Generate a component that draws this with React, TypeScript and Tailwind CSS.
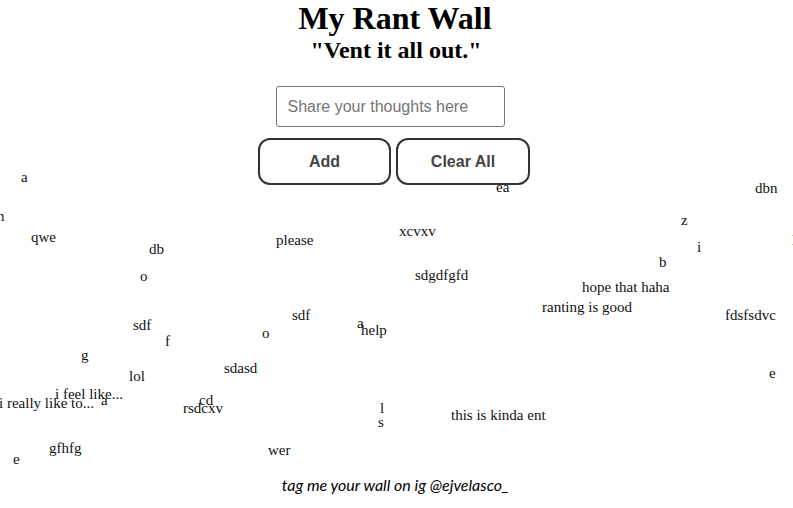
const words: { text: string; x: number; y: number }[] = [
  { text: "a", x: 21, y: 169 },
  { text: "n", x: -3, y: 208 },
  { text: "qwe", x: 31, y: 229 },
  { text: "db", x: 149, y: 241 },
  { text: "o", x: 140, y: 268 },
  { text: "please", x: 276, y: 232 },
  { text: "xcvxv", x: 399, y: 223 },
  { text: "sdgdfgfd", x: 415, y: 267 },
  { text: "ea", x: 496, y: 179 },
  { text: "dbn", x: 755, y: 180 },
  { text: "z", x: 681, y: 212 },
  { text: "i", x: 697, y: 239 },
  { text: "l", x: 792, y: 232 },
  { text: "b", x: 659, y: 254 },
  { text: "hope that haha", x: 582, y: 279 },
  { text: "ranting is good", x: 542, y: 299 },
  { text: "fdsfsdvc", x: 725, y: 307 },
  { text: "sdf", x: 133, y: 317 },
  { text: "f", x: 165, y: 333 },
  { text: "sdf", x: 292, y: 307 },
  { text: "o", x: 262, y: 325 },
  { text: "a", x: 357, y: 315 },
  { text: "help", x: 361, y: 322 },
  { text: "g", x: 81, y: 347 },
  { text: "lol", x: 129, y: 368 },
  { text: "sdasd", x: 224, y: 360 },
  { text: "e", x: 769, y: 365 },
  { text: "i feel like...", x: 55, y: 386 },
  { text: "i really like to...", x: -1, y: 395 },
  { text: "a", x: 101, y: 392 },
  { text: "cd", x: 199, y: 392 },
  { text: "rsdcxv", x: 183, y: 400 },
  { text: "l", x: 380, y: 400 },
  { text: "s", x: 378, y: 414 },
  { text: "this is kinda ent", x: 451, y: 407 },
  { text: "gfhfg", x: 49, y: 440 },
  { text: "e", x: 13, y: 451 },
  { text: "wer", x: 268, y: 442 },
];

const RantWord = (props: { text: string; x: number; y: number }) => {
  const { text, x, y } = props;
  return (
    <span
      className="absolute whitespace-nowrap text-[15px] leading-[17px] text-[#111]"
      style={{ left: x, top: y }}
    >
      {text}
    </span>
  );
};

const App = () => {
  return (
    <div className="relative h-[508px] w-full overflow-hidden bg-white font-['Liberation_Serif',serif] text-black">
      {/* the wall */}
      <div className="absolute inset-0">
        {words.map((w, i) => (
          <RantWord key={i} text={w.text} x={w.x} y={w.y} />
        ))}
      </div>

      <div className="relative flex h-full flex-col items-center">
        <h1 className="mr-[3px] text-[32px] font-bold leading-[36px]">My Rant Wall</h1>
        <h2 className="mr-[1px] text-[24px] font-bold leading-[28px]">"Vent it all out."</h2>

        <input
          type="text"
          placeholder="Share your thoughts here"
          className="mt-[22px] mr-[13px] h-[41px] w-[229px] rounded-[3px] border border-[#767676] bg-white px-[11px] font-['Liberation_Sans',sans-serif] text-[16px] text-black outline-none placeholder:text-[#757575]"
        />

        <div className="mt-[11px] mr-[5px] flex gap-[5px] font-['Liberation_Sans',sans-serif]">
          <button className="h-[47px] w-[133px] rounded-[12px] border-2 border-[#333] bg-white text-[16px] font-bold text-[#444]">
            Add
          </button>
          <button className="h-[47px] w-[134px] rounded-[12px] border-2 border-[#333] bg-white text-[16px] font-bold text-[#444]">
            Clear All
          </button>
        </div>

        <p className="mt-auto mb-[14px] mr-[2px] font-['Lato',sans-serif] text-[16px] italic leading-[18px]">
          tag me your wall on ig @ejvelasco_
        </p>
      </div>
    </div>
  );
};

export default App;
